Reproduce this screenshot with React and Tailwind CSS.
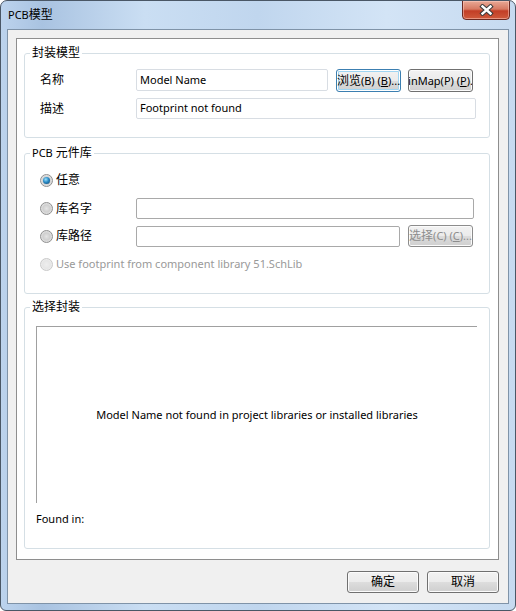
const font = "font-[family-name:Noto_Sans,Noto_Sans_CJK_SC,sans-serif]";

function Cjk({ children }) {
  return <span className="text-[12px]">{children}</span>;
}

function GroupBox({ title, className, children }) {
  return (
    <div className={`relative border border-[#d5dfe5] rounded-[3px] ${className}`}>
      <div className="absolute left-[5px] top-[-9px] px-[2px] bg-white leading-[16px] text-black">
        {title}
      </div>
      {children}
    </div>
  );
}

function Button({ children, className, focused, disabled }) {
  let look = "border-[#707070] shadow-[inset_0_0_0_1px_#fbfbfb] text-black";
  if (focused) look = "border-[#3c7fb1] shadow-[inset_0_0_0_1px_#ffffff,inset_0_0_0_2px_#9fd5f2] text-black";
  if (disabled) look = "border-[#8c8c8c] shadow-[inset_0_0_0_1px_#fbfbfb] text-[#8d8d8d]";
  return (
    <div
      className={`flex items-center justify-center overflow-hidden whitespace-nowrap rounded-[3px] border bg-[linear-gradient(#f2f2f2_0%,#ebebeb_50%,#dddddd_50%,#cfcfcf_100%)] text-[11px] leading-[16px] ${look} ${className}`}
    >
      {children}
    </div>
  );
}

function Radio({ checked, disabled }) {
  if (disabled) {
    return (
      <span className="w-[13px] h-[13px] rounded-full border border-[#c9c9c9] bg-[radial-gradient(circle,#eeeeee_0%,#e6e6e6_50%,#f6f6f6_100%)] shrink-0" />
    );
  }
  return (
    <span className="w-[13px] h-[13px] rounded-full border border-[#8f8f8f] bg-[radial-gradient(circle,#e4e4e4_0%,#cfcfcf_45%,#f7f7f7_100%)] flex items-center justify-center shrink-0">
      {checked && (
        <span className="w-[7px] h-[7px] rounded-full bg-[radial-gradient(circle_at_40%_35%,#9ce0fb_0%,#2a8bc6_45%,#0d3f6a_100%)]" />
      )}
    </span>
  );
}

function Field({ className, value, light }) {
  return (
    <div
      className={`flex items-center pl-[3px] rounded-[2px] border bg-white text-[11px] text-black whitespace-nowrap overflow-hidden ${
        light ? "border-[#d8dde3]" : "border-[#a9a9a9]"
      } ${className}`}
    >
      {value}
    </div>
  );
}

function CloseGlyph() {
  return (
    <svg width="15" height="12" viewBox="0 0 15 12">
      <path d="M3.5 2.5 L11.5 9.5 M11.5 2.5 L3.5 9.5" stroke="#3b3b3b" strokeWidth="4.4" strokeLinecap="square" />
      <path d="M3.5 2.5 L11.5 9.5 M11.5 2.5 L3.5 9.5" stroke="#ffffff" strokeWidth="2.4" strokeLinecap="square" />
    </svg>
  );
}

export default function App() {
  return (
    <div className={`${font} w-[516px] h-[611px] relative flex flex-col overflow-hidden rounded-t-[7px] rounded-b-[6px] border border-[#4a5766] bg-[linear-gradient(90deg,#bcd3ed_0%,#a9c3e1_8%,#cadef3_28%,#c0d6ee_50%,#d3e4f6_75%,#c6daf0_100%)] text-[11px]`}>
      {/* title bar */}
      <div className="h-[28px] flex items-center pl-[7px] text-[11px] text-black">
        PCB<Cjk>模型</Cjk>
      </div>
      <div className="absolute top-[-1px] right-[5px] w-[48px] h-[20px] rounded-b-[4px] border border-[#6b2a22] bg-[linear-gradient(#e9a996_0%,#d77a63_45%,#c23e26_55%,#cf5a3c_100%)] shadow-[inset_0_0_0_1px_rgba(255,210,200,0.5)] flex items-center justify-center">
        <CloseGlyph />
      </div>

      {/* client area */}
      <div className="mx-[6px] mb-[6px] flex-1 border border-[#7f93a8] bg-[#f0f0f0] flex flex-col pt-[8px] pl-[8px]">
        <div className="w-[483px] h-[522px] border border-[#8e8e8e] bg-white pl-[7px] pt-[14px] flex flex-col text-black">
          <GroupBox title={<Cjk>封装模型</Cjk>} className="w-[466px] h-[85px] pt-[15px] pl-[15px]">
            <div className="flex items-start h-[23px]">
              <div className="w-[96px] leading-[22px]"><Cjk>名称</Cjk></div>
              <Field light className="w-[192px] h-[22px]" value="Model Name" />
              <Button focused className="ml-[8px] w-[65px] h-[23px]">
                <span><Cjk>浏览</Cjk>(B) (<span className="underline">B</span>)...</span>
              </Button>
              <Button className="ml-[7px] w-[65px] h-[23px]">
                <span>inMap(P) (<span className="underline">P</span>).</span>
              </Button>
            </div>
            <div className="flex items-center mt-[6px] h-[21px]">
              <div className="w-[96px]"><Cjk>描述</Cjk></div>
              <Field light className="w-[340px] h-[21px]" value="Footprint not found" />
            </div>
          </GroupBox>

          <GroupBox title={<span>PCB <Cjk>元件库</Cjk></span>} className="w-[466px] h-[141px] mt-[15px] pt-[15px] pl-[15px]">
            <div className="flex items-center h-[22px]">
              <Radio checked />
              <span className="ml-[3px]"><Cjk>任意</Cjk></span>
            </div>
            <div className="flex items-center mt-[7px] h-[21px]">
              <div className="w-[96px] flex items-center">
                <Radio />
                <span className="ml-[3px]"><Cjk>库名字</Cjk></span>
              </div>
              <Field className="w-[338px] h-[21px]" value="" />
            </div>
            <div className="flex items-end mt-[6px] h-[22px]">
              <div className="w-[96px] flex items-center self-center">
                <Radio />
                <span className="ml-[3px]"><Cjk>库路径</Cjk></span>
              </div>
              <Field className="w-[264px] h-[21px]" value="" />
              <Button disabled className="ml-[8px] w-[65px] h-[22px]">
                <span><Cjk>选择</Cjk>(C) (<span className="underline">C</span>)...</span>
              </Button>
            </div>
            <div className="flex items-center mt-[9px] h-[16px]">
              <Radio disabled />
              <span className="ml-[3px] text-[#999999]">Use footprint from component library 51.SchLib</span>
            </div>
          </GroupBox>

          <GroupBox title={<Cjk>选择封装</Cjk>} className="w-[466px] h-[242px] mt-[13px] pt-[18px] pl-[11px]">
            <div className="w-[441px] h-[177px] border-t border-l border-[#a0a0a0] flex items-center justify-center">
              Model Name not found in project libraries or installed libraries
            </div>
            <div className="mt-[8px] leading-[16px]">Found in:</div>
          </GroupBox>
        </div>

        <div className="mt-[11px] pr-[9px] flex justify-end gap-[8px]">
          <Button className="w-[72px] h-[22px]"><Cjk>确定</Cjk></Button>
          <Button className="w-[72px] h-[22px]"><Cjk>取消</Cjk></Button>
        </div>
      </div>
    </div>
  );
}
